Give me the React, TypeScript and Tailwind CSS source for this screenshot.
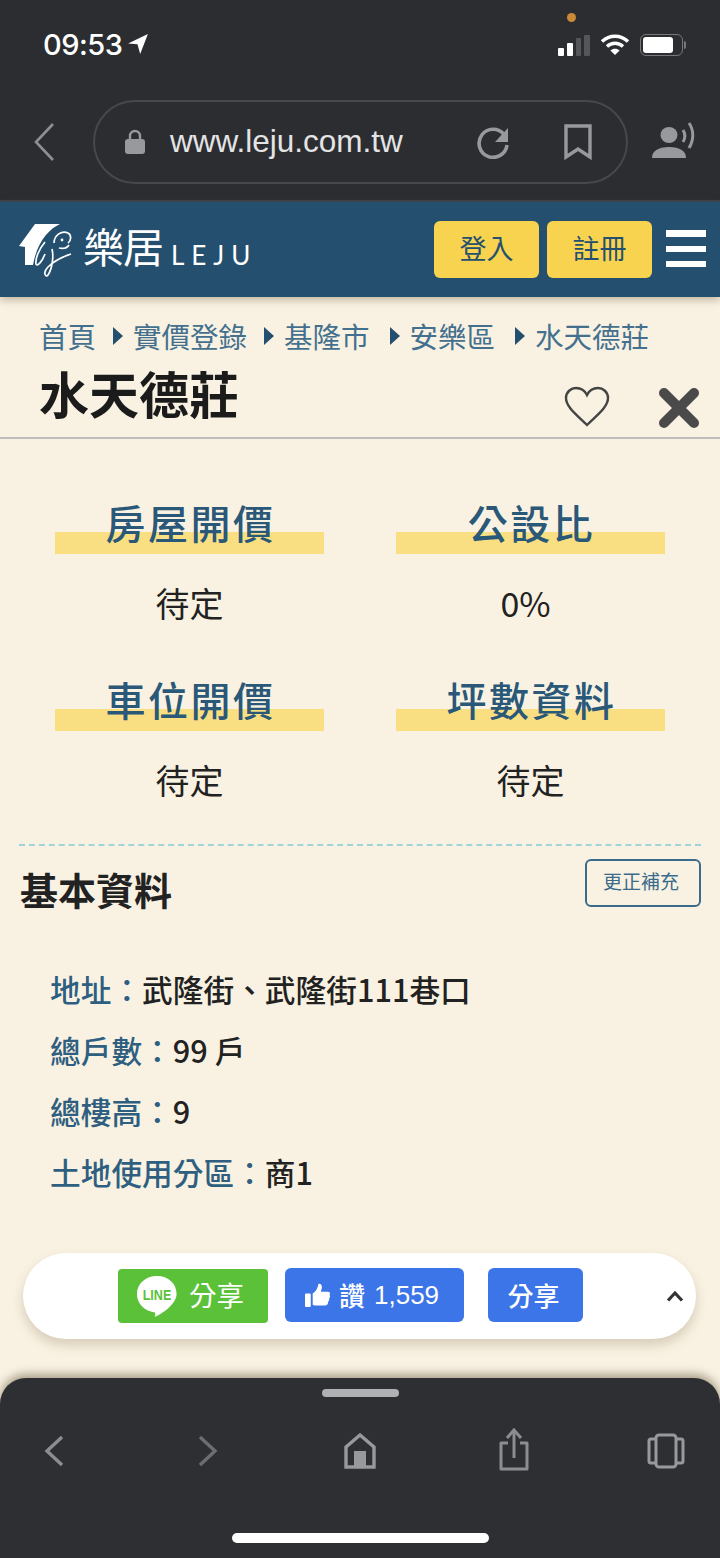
const cjk = "font-['Noto_Sans_CJK_TC','Liberation_Sans',sans-serif]";

function StatusBar() {
  return (
    <div className="relative flex h-[100px] items-start justify-between pl-[43px] pr-[34px] pt-[28px]">
      <div className="flex items-center gap-[5px]">
        <span className="text-[29px] leading-[34px] font-medium text-white font-['Inter',sans-serif] tracking-[-0.5px]">09:53</span>
        <svg width="22" height="22" viewBox="0 0 20 20" className="mt-[-2px]">
          <path d="M19 1 1 9.5l8.5.8L12 19z" fill="#fff" />
        </svg>
      </div>
      <span className="absolute left-[567px] top-[13px] h-[9px] w-[9px] rounded-full bg-[#c98a35]" />
      <div className="flex items-center gap-[10px] pt-[5px]">
        <div className="flex items-end gap-[3px]">
          <span className="h-[8px] w-[5.75px] rounded-[1px] bg-white" />
          <span className="h-[13px] w-[5.75px] rounded-[1px] bg-white" />
          <span className="h-[18px] w-[5.75px] rounded-[1px] bg-[#55565a]" />
          <span className="h-[21px] w-[5.75px] rounded-[1px] bg-[#55565a]" />
        </div>
        <svg width="30" height="24" viewBox="0 0 30 24" fill="none" stroke="#fff" strokeWidth="3.4">
          <path d="M2 8.5C9.5 1.5 20.5 1.5 28 8.5" />
          <path d="M7 13.5c4.7-4.3 11.3-4.3 16 0" />
          <path d="M15 22l-4.6-4.6c2.6-2.2 6.6-2.2 9.2 0z" fill="#fff" stroke="none" />
        </svg>
        <div className="flex items-center gap-[1px]">
          <div className="flex h-[22px] w-[43px] items-center rounded-[6px] border border-[#77787b] p-[2px]">
            <span className="h-full w-[30px] rounded-[3px] bg-white" />
          </div>
          <span className="h-[8px] w-[2px] rounded-r-full bg-[#77787b]" />
        </div>
      </div>
    </div>
  );
}

function UrlBar() {
  return (
    <div className="flex h-[100px] items-start pl-[34px]">
      <svg width="20" height="38" viewBox="0 0 20 38" fill="none" stroke="#8e8f92" strokeWidth="2.6" className="mt-[23px] shrink-0">
        <path d="M19 1 2 19l17 18" />
      </svg>
      <div className="ml-[39px] flex h-[84px] w-[535px] shrink-0 items-center rounded-full border-2 border-[#47484b] pl-[30px] pr-[34px]">
        <svg width="20" height="26" viewBox="0 0 20 26" className="mt-[-1px] shrink-0">
          <path d="M5 11V7a5 5 0 0 1 10 0v4" fill="none" stroke="#98999c" strokeWidth="2.4" />
          <rect y="10" width="20" height="15" rx="3" fill="#98999c" />
        </svg>
        <span className="ml-[25px] text-[31.5px] leading-none text-[#e4e4e5] font-['Liberation_Sans',sans-serif]">www.leju.com.tw</span>
        <svg width="34" height="34" viewBox="0 0 34 34" fill="none" className="ml-auto shrink-0">
          <path d="M27 9.5A14 14 0 1 0 30 20" stroke="#98999c" strokeWidth="3.6" />
          <path d="M31 3v14H18z" fill="#98999c" />
        </svg>
        <svg width="28" height="36" viewBox="0 0 28 36" fill="none" stroke="#98999c" strokeWidth="3.4" className="ml-[53px] shrink-0">
          <path d="M2 2h24v31L14 25 2 33z" />
        </svg>
      </div>
      <svg width="44" height="37" viewBox="0 0 44 37" fill="#98999c" className="ml-[24px] mt-[22px] shrink-0">
        <ellipse cx="17" cy="13" rx="8.5" ry="8" />
        <path d="M0 36c0-7 6-11 17-11s17 4 17 11z" />
        <path d="M31 8c2.5 4 2.5 8 0 12M37 1c5 7 5 17 0 25" fill="none" stroke="#98999c" strokeWidth="3" />
      </svg>
    </div>
  );
}

function LogoMark() {
  return (
    <svg width="54" height="56" viewBox="0 0 54 56" fill="none" className="shrink-0">
      <path d="M0 24 16 2h25C30 7 18 20 14 43H6V25z" fill="#fff" />
      <path d="M35 21c0-8 8-13 14-10 4 2 3 8 0 10M40 26c4 1 8 0 10-3" stroke="#fff" strokeWidth="1.7" />
      <path d="M26 20c-6 7-10 17-9 22 1 3 6-2 9-10" stroke="#fff" strokeWidth="1.7" />
      <path d="M33 27c2 8 0 20-4 26-2 3-6-2 0-8 6-6 14-10 23-13" stroke="#fff" strokeWidth="1.7" />
      <circle cx="43" cy="18" r="1.4" fill="#fff" />
    </svg>
  );
}

function SiteHeader() {
  return (
    <div className="relative flex h-[97px] shrink-0 items-center border-t-2 border-[#3f4347] bg-[#254f6e] pl-[19px] pr-[14px] shadow-[0_3px_8px_rgba(90,70,40,0.35)]">
      <LogoMark />
      <span className="ml-[10px] mt-[-9px] text-[41px] leading-none font-normal text-white tracking-[-1px] font-['Noto_Sans_CJK_TC',sans-serif]">樂居</span>
      <span className="ml-[8px] mt-[11px] text-[26px] leading-none font-normal text-white tracking-[7px] font-['Lato',sans-serif]">LEJU</span>
      <button className={`ml-auto h-[57px] w-[105px] rounded-[6px] bg-[#f7d350] text-[27px] text-[#254f6e] ${cjk}`}>
        <span className="relative top-[-1px]">登入</span>
      </button>
      <button className={`ml-[8px] h-[57px] w-[105px] rounded-[6px] bg-[#f7d350] text-[27px] text-[#254f6e] ${cjk}`}>
        <span className="relative top-[-1px]">註冊</span>
      </button>
      <div className="ml-[14px] mt-[-3px] flex w-[40px] flex-col gap-[9px]">
        <span className="h-[7px] bg-white" />
        <span className="h-[6px] bg-white" />
        <span className="h-[6px] bg-white" />
      </div>
    </div>
  );
}

function Arrow({ wide }: { wide?: boolean }) {
  return (
    <span
      className={`mr-[10px] h-0 w-0 border-y-[9px] border-l-[10px] border-y-transparent border-l-[#254f6e] ${wide ? "ml-[20px]" : "ml-[17px]"}`}
    />
  );
}

function Stat({ label, value, shifted }: { label: string; value: string; shifted?: boolean }) {
  return (
    <div className="flex w-[269px] flex-col items-center">
      <div className="relative flex h-[53px] w-full justify-center">
        <span className="absolute bottom-0 left-0 h-[22px] w-full bg-[#f9df82]" />
        <span className="relative top-[-5px] pl-[2px] text-[40px] leading-[53px] font-medium text-[#2a5878] tracking-[2.5px]">{label}</span>
      </div>
      <span className={`mt-[27px] mb-[3px] text-[34px] leading-[44px] text-[#222] ${shifted ? "pr-[10px]" : ""}`}>{value}</span>
    </div>
  );
}

function InfoRow({ label, value }: { label: string; value: string }) {
  return (
    <div className="h-[61.3px] text-[30.7px] leading-[40px] font-medium">
      <span className="text-[#2f5f80]">{label}：</span>
      <span className="text-[#222]">{value}</span>
    </div>
  );
}

function ShareBar() {
  return (
    <div className="absolute left-[23px] top-[1253px] flex h-[86px] w-[673px] items-center rounded-full bg-white pl-[95px] pr-[12px] shadow-[0_6px_12px_rgba(90,70,40,0.22)]">
      <div className="flex h-[54px] w-[150px] items-center rounded-[4px] bg-[#5ac138] pl-[18px] text-[27.5px] text-white">
        <svg width="42" height="42" viewBox="0 0 44 44" className="shrink-0">
          <path d="M22 1C10 1 1 9 1 20c0 10 8 18 18 19 2 .5 1 4 .5 5 6-2 23-13 23-24C42.5 9 34 1 22 1z" fill="#fff" />
          <text x="7" y="26" fontSize="15" fontWeight="700" fill="#5ac138" textLength="30" lengthAdjust="spacingAndGlyphs" fontFamily="Liberation Sans, sans-serif">LINE</text>
        </svg>
        <span className="ml-[11px] relative top-[-1px]">分享</span>
      </div>
      <div className="ml-[17px] mt-[-2px] flex h-[54px] w-[179px] items-center rounded-[6px] bg-[#3b75e8] pl-[20px] text-[26px] text-white">
        <svg width="25" height="25" viewBox="0 0 26 26" fill="#fff" className="shrink-0">
          <rect x="0" y="11" width="6" height="14" rx="1" />
          <path d="M8 11c3-2 5-5 6-10 2-1 4 1 3.5 4L16.5 9H24c2 0 2.5 2 1.5 3.5 1 1.500.5 3-.5 3.500.5 1.500 0 3-1 3.500.3 2-1 4-3 4H12c-2 0-4-1-4-1z" />
        </svg>
        <span className="ml-[9px] font-medium relative top-[-1px]">讚</span>
        <span className="ml-[9px] font-['Liberation_Sans',sans-serif]">1,559</span>
      </div>
      <div className="ml-[24px] mt-[-2px] flex h-[54px] w-[95px] items-center justify-center rounded-[6px] bg-[#3b75e8] pb-[2px] pr-[4px] text-[26px] font-medium text-white">分享</div>
      <svg width="18" height="12" viewBox="0 0 18 12" fill="none" stroke="#333" strokeWidth="3.2" className="ml-auto">
        <path d="M2 10.5 9 3l7 7.5" />
      </svg>
    </div>
  );
}

function BottomBar() {
  return (
    <div className="relative flex h-[180px] shrink-0 flex-col items-center rounded-t-[26px] bg-[#2e2f33] shadow-[0_-4px_10px_rgba(70,55,30,0.45)]">
      <span className="mt-[11px] h-[8px] w-[77px] rounded-full bg-[#b0b1b3]" />
      <div className="mt-[31px] flex w-full items-center pl-[44px]">
        <svg width="20" height="32" viewBox="0 0 20 32" fill="none" stroke="#8c8d90" strokeWidth="3.4" className="shrink-0">
          <path d="M18 2 3 16l15 14" />
        </svg>
        <svg width="20" height="32" viewBox="0 0 20 32" fill="none" stroke="#6c6d70" strokeWidth="3.4" className="ml-[134px] shrink-0">
          <path d="M2 2l15 14L2 30" />
        </svg>
        <svg width="32" height="36" viewBox="0 0 32 36" fill="none" className="ml-[126px] shrink-0">
          <path d="M2 34V14L16 2l14 12v20z" stroke="#98999c" strokeWidth="3.4" />
          <rect x="10" y="18" width="12" height="16" fill="#98999c" />
        </svg>
        <svg width="32" height="44" viewBox="0 0 32 44" fill="none" stroke="#8c8d90" strokeWidth="3" className="ml-[122px] mb-[2px] shrink-0">
          <path d="M10 15H3v26h26V15h-7" strokeLinejoin="round" />
          <path d="M16 30V4" />
          <path d="M9 10l7-8 7 8" />
        </svg>
        <svg width="38" height="36" viewBox="0 0 38 36" fill="none" stroke="#98999c" strokeWidth="3" className="ml-[117px] shrink-0">
          <rect x="9" y="2" width="20" height="32" rx="3" />
          <path d="M9 6H4a2 2 0 0 0-2 2v20a2 2 0 0 0 2 2h5M29 6h5a2 2 0 0 1 2 2v20a2 2 0 0 1-2 2h-5" />
        </svg>
      </div>
      <span className="absolute bottom-[15px] h-[10px] w-[257px] rounded-full bg-white" />
    </div>
  );
}

export default function App() {
  return (
    <div className={`relative flex h-[1558px] w-[720px] flex-col overflow-hidden bg-[#f9f2e2] ${cjk}`}>
      <div className="h-[200px] shrink-0 bg-[#2c2d31]">
        <StatusBar />
        <UrlBar />
      </div>
      <SiteHeader />

      <div className="flex-1">
        <div className="mt-[16px] flex items-center pl-[39px] text-[28.5px] leading-[46px] text-[#44708f]">
          <span>首頁</span>
          <Arrow />
          <span>實價登錄</span>
          <Arrow />
          <span>基隆市</span>
          <Arrow wide />
          <span>安樂區</span>
          <Arrow wide />
          <span>水天德莊</span>
        </div>
        <div className="mt-[11px] flex h-[56px] items-center pl-[39px] pr-[21px]">
          <h1 className="relative top-[-6px] text-[50px] leading-[56px] font-bold text-[#1b1b1b]">水天德莊</h1>
          <svg width="46" height="42" viewBox="0 0 46 42" fill="none" stroke="#444" strokeWidth="2.4" className="ml-auto mt-[17px]">
            <path d="M23 39C13 29 2 21 2 12 2 6 7 2 12 2c5 0 9 3 11 7 2-4 6-7 11-7 5 0 10 4 10 10 0 9-11 17-21 27z" />
          </svg>
          <svg width="40" height="40" viewBox="0 0 40 40" fill="none" stroke="#4a4a4a" strokeWidth="10" strokeLinecap="round" className="ml-[49px] mt-[19px]">
            <path d="M5 5l30 30M35 5 5 35" />
          </svg>
        </div>
        <div className="mt-[11px] h-[2px] bg-[#bdbdb9]" />

        <div className="mt-[62px] grid grid-cols-[269px_269px] justify-between gap-y-[49.5px] px-[55px]">
          <Stat label="房屋開價" value="待定" />
          <Stat label="公設比" value="0%" shifted />
          <Stat label="車位開價" value="待定" />
          <Stat label="坪數資料" value="待定" />
        </div>

        <div className="mx-[19px] mt-[39px] border-t-2 border-dashed border-[#9fd5d8]" />
        <div className="flex items-start justify-between pl-[20px] pr-[19px]">
          <h2 className="mt-[18px] text-[38px] leading-[50px] font-bold text-[#222]">基本資料</h2>
          <span className="mt-[13px] flex h-[48px] w-[116px] items-center justify-center rounded-[6px] border-2 border-[#3b6b8c] pb-[2px] pr-[4px] text-[19px] text-[#3b6b8c]">更正補充</span>
        </div>
        <div className="mt-[55px] pl-[50px]">
          <InfoRow label="地址" value="武隆街、武隆街111巷口" />
          <InfoRow label="總戶數" value="99 戶" />
          <InfoRow label="總樓高" value="9" />
          <InfoRow label="土地使用分區" value="商1" />
        </div>
      </div>

      <ShareBar />
      <BottomBar />
    </div>
  );
}
